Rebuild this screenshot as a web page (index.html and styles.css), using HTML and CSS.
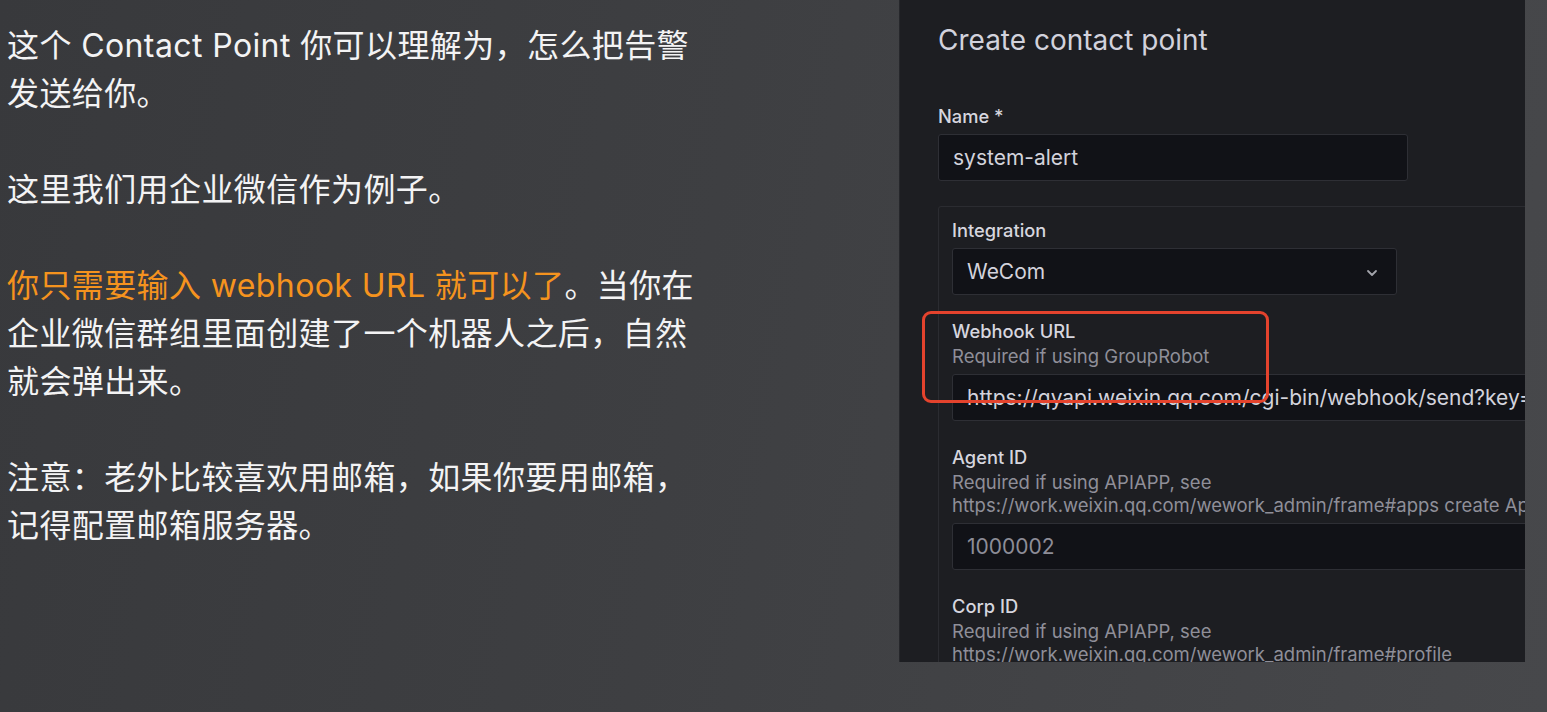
FILE: index.html
```html
<!DOCTYPE html>
<html lang="zh-CN">
<head>
<meta charset="utf-8">
<title>Create contact point</title>
<link rel="stylesheet" href="styles.css">
</head>
<body>
<div class="page">
  <article class="notes">
    <p>这个 Contact Point 你可以理解为，怎么把告警发送给你。</p>
    <p>这里我们用企业微信作为例子。</p>
    <p><span class="hl">你只需要输入 webhook URL 就可以了</span>。当你在企业微信群组里面创建了一个机器人之后，自然就会弹出来。</p>
    <p>注意：老外比较喜欢用邮箱，如果你要用邮箱，记得配置邮箱服务器。</p>
  </article>

  <section class="panel">
    <h1 class="title">Create contact point</h1>

    <div class="field field-name">
      <div class="label">Name *</div>
      <div class="control control-name">system-alert</div>
    </div>

    <div class="group">
      <div class="field">
        <div class="label">Integration</div>
        <div class="control control-select">
          <span>WeCom</span>
          <svg class="chevron" width="12" height="8" viewBox="0 0 12 8" aria-hidden="true">
            <path d="M2 2 L6 6 L10 2" fill="none" stroke="#a3a4ab" stroke-width="1.8" stroke-linecap="round" stroke-linejoin="round"/>
          </svg>
        </div>
      </div>

      <div class="field">
        <div class="label">Webhook URL</div>
        <div class="desc">Required if using GroupRobot</div>
        <div class="control control-wide">https://qyapi.weixin.qq.com/cgi-bin/webhook/send?key=2c7e4a91-0b5d-4f3e</div>
      </div>

      <div class="field">
        <div class="label">Agent ID</div>
        <div class="desc">Required if using APIAPP, see https://work.weixin.qq.com/wework_admin/frame#apps create ApiApp</div>
        <div class="control control-wide placeholder">1000002</div>
      </div>

      <div class="field">
        <div class="label">Corp ID</div>
        <div class="desc">Required if using APIAPP, see https://work.weixin.qq.com/wework_admin/frame#profile</div>
        <div class="control control-wide placeholder">wwxxxxxxx</div>
      </div>
    </div>

    <div class="annotation"></div>
  </section>
</div>
</body>
</html>
```

FILE: styles.css
```css
html, body {
  margin: 0;
  padding: 0;
}

body {
  width: 1547px;
  height: 712px;
  overflow: hidden;
  background: linear-gradient(100deg, #38393c 0%, #3e3f42 45%, #47484b 100%);
  font-family: Inter, "Noto Sans CJK SC", sans-serif;
}

.page {
  display: flex;
  align-items: flex-start;
  height: 712px;
}

.notes {
  flex: 0 0 899px;
  box-sizing: border-box;
  padding: 22px 0 0 7px;
}

.notes p {
  max-width: 700px;
  margin: 0 0 48px;
  font-family: Inter, "Noto Sans CJK SC", sans-serif;
  font-size: 32px;
  line-height: 48px;
  letter-spacing: 0.4px;
  color: #f3f3f4;
}

.notes .hl {
  color: #f5931e;
}

.panel {
  position: relative;
  flex: 0 0 626px;
  box-sizing: border-box;
  height: 662px;
  padding: 23px 0 0 38px;
  background: #1d1e22;
  border-left: 1px solid #26272b;
  overflow: hidden;
}

.title {
  margin: 0 0 48px;
  font-size: 28px;
  line-height: 34px;
  font-weight: 400;
  color: #d2d2dc;
  white-space: nowrap;
}

.field {
  margin-bottom: 25px;
}

.label {
  font-size: 18.3px;
  line-height: 22px;
  font-weight: 500;
  color: #d6d6df;
  white-space: nowrap;
}

.desc {
  margin-top: 3px;
  font-size: 18.5px;
  line-height: 23px;
  color: #8f8f99;
}

.control {
  display: flex;
  align-items: center;
  box-sizing: border-box;
  height: 47px;
  margin-top: 7px;
  padding: 0 14px;
  background: #111217;
  border: 1px solid #2e2f35;
  border-radius: 3px;
  font-size: 21px;
  color: #d3d3dc;
  white-space: nowrap;
  overflow: hidden;
}

.desc + .control {
  margin-top: 6px;
}

.control-name {
  width: 470px;
}

.control-select {
  width: 445px;
  padding-right: 18px;
}

.chevron {
  margin-left: auto;
  flex: none;
  position: relative;
  top: 1px;
}

.control-wide {
  width: 660px;
}

.placeholder {
  color: #8d8d97;
}

.group {
  box-sizing: border-box;
  width: 740px;
  padding: 12px 13px 0;
  border: 1px solid #2b2c31;
  border-radius: 3px;
}

.annotation {
  position: absolute;
  left: 22px;
  top: 311px;
  width: 347px;
  height: 92px;
  box-sizing: border-box;
  border: 3px solid #e4432d;
  border-radius: 9px;
  pointer-events: none;
}
```
